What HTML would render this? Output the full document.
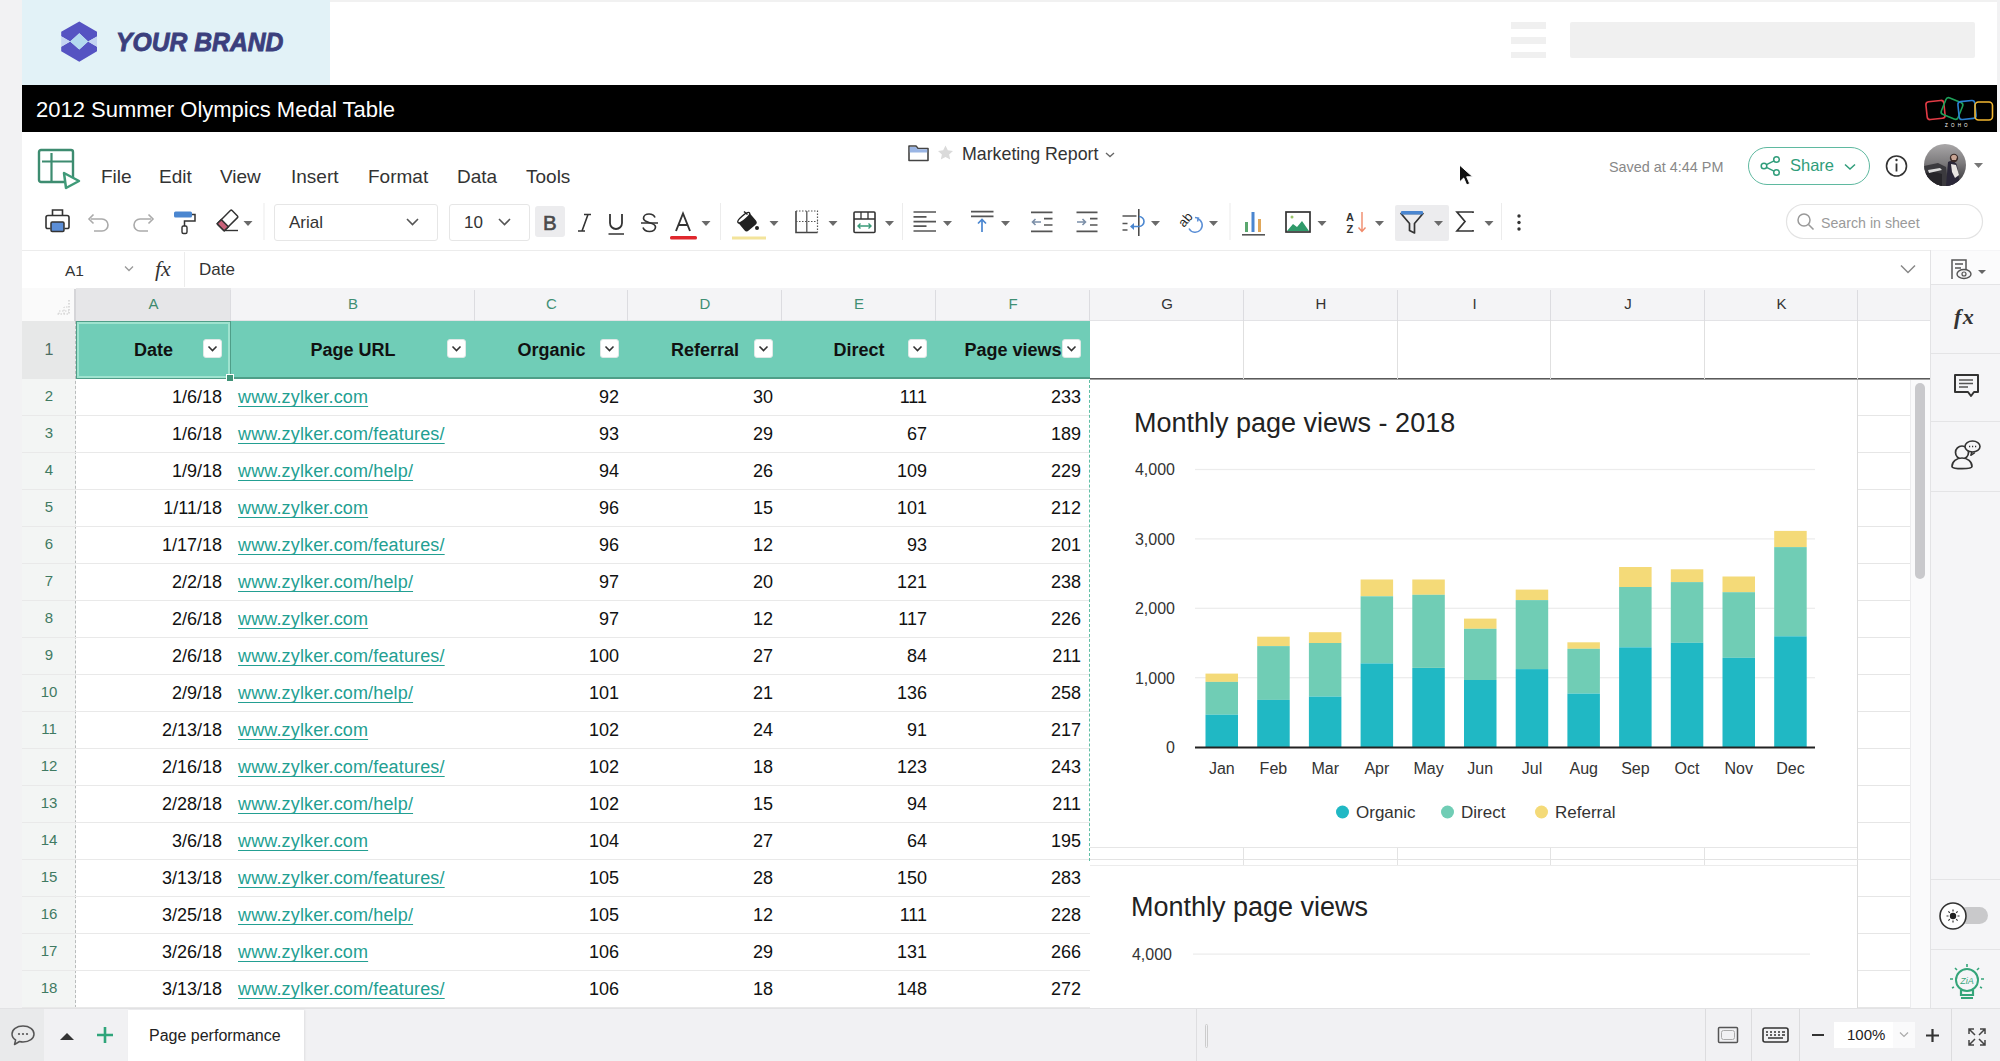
<!DOCTYPE html>
<html><head><meta charset="utf-8">
<style>
*{box-sizing:border-box;margin:0;padding:0}
html,body{width:2000px;height:1061px;overflow:hidden;background:#f2f2f3;font-family:"Liberation Sans",sans-serif;color:#222;position:relative}
.abs{position:absolute}
svg{display:block}
.menu{top:166px;font-size:19px;color:#333}
.ch{top:288px;height:33px;line-height:31px;text-align:center;font-size:15px}
.hd{top:321px;height:58px;line-height:58px;text-align:center;font-size:18px;font-weight:bold;color:#111}
.fb{top:339px;width:19px;height:19px;background:#fff;border-radius:3px;border:1px solid #dfe8e6}
.rn{left:22px;width:54px;height:37px;line-height:34px;text-align:center;font-size:15px;color:#3f7a62}
.cell{height:37px;line-height:37px;font-size:18px;color:#111;white-space:nowrap;overflow:hidden}
.cell.r{text-align:right;padding-right:9px}
.lnk{padding-left:7px;color:#239f92;text-decoration:underline;text-decoration-skip-ink:none;text-underline-offset:3px;letter-spacing:0.15px}
.tbi{top:208px}
</style></head>
<body>
<div class="abs" style="left:22px;top:0;width:1975px;height:85px;background:#fff"></div>
<div class="abs" style="left:22px;top:0;width:308px;height:85px;background:#e2f2f7"></div>
<div class="abs" style="left:330px;top:0;width:1667px;height:2px;background:#f1f1f1"></div>
<svg class="abs" style="left:0;top:0" width="120" height="80" viewBox="0 0 120 80"><path d="M61.2 31.8L79.3 21.5 97 31.8V36.5L88.1 41.5 79.3 33.2 70.2 41.5 61.2 36.2Z" fill="#5553c2"/><path d="M61.2 46.8L70.2 41.5 79.3 49.5 88.1 41.5 97 46.8V51.3L79.3 61.7 61.2 51.3Z" fill="#5553c2"/><path d="M61.2 36.2L70.2 41.5 61.2 46.8Z M97 36.5L88.1 41.5 97 46.8Z" fill="#c4d4f2"/><path d="M79.3 33.2L88.1 41.5 79.3 49.5 70.2 41.5Z" fill="#b3d9ef"/></svg>
<div class="abs" style="left:116px;top:27px;font-size:26.5px;font-weight:bold;font-style:italic;color:#3b3f7d;-webkit-text-stroke:0.9px #3b3f7d;transform:scaleX(0.932);transform-origin:0 0;white-space:nowrap">YOUR BRAND</div>
<div class="abs" style="left:1511px;top:22px;width:35px;height:7px;background:#f0f0f0"></div>
<div class="abs" style="left:1511px;top:37px;width:35px;height:7px;background:#f0f0f0"></div>
<div class="abs" style="left:1511px;top:52px;width:35px;height:6px;background:#f0f0f0"></div>
<div class="abs" style="left:1570px;top:22px;width:405px;height:36px;background:#f0f0f0;border-radius:2px"></div>
<div class="abs" style="left:22px;top:85px;width:1975px;height:47px;background:#000"></div>
<div class="abs" style="left:36px;top:97px;font-size:22px;color:#fff">2012 Summer Olympics Medal Table</div>
<div class="abs" style="left:22px;top:132px;width:1978px;height:929px;background:#fff"></div>
<div class="abs" style="left:37px;top:148px"><svg width="44" height="42" viewBox="0 0 44 42"><rect x="2" y="2" width="34" height="32" rx="2" fill="none" stroke="#3d8c70" stroke-width="2.4"/><path d="M5 13.5h31 M14.5 5v29" fill="none" stroke="#3d8c70" stroke-width="2.2"/><path d="M27 25 L42 33 L29 40 Z" fill="#fff" stroke="#3f9a78" stroke-width="2.5" stroke-linejoin="round"/></svg></div>
<div class="abs menu" style="left:101px">File</div>
<div class="abs menu" style="left:159px">Edit</div>
<div class="abs menu" style="left:220px">View</div>
<div class="abs menu" style="left:291px">Insert</div>
<div class="abs menu" style="left:368px">Format</div>
<div class="abs menu" style="left:457px">Data</div>
<div class="abs menu" style="left:526px">Tools</div>
<div class="abs" style="left:962px;top:144px;font-size:17.8px;color:#333">Marketing Report</div>
<svg class="abs" style="left:0;top:80px" width="2000" height="120" viewBox="0 80 2000 120">
<path d="M909 146h7l2 2.5h10v12h-19z" fill="#fff" stroke="#444" stroke-width="1.6" stroke-linejoin="round"/><path d="M909.8 147h6l2 2.2h9.4v3.3h-17.4z" fill="#9ab5e4"/>
<path d="M945.5 145.5l2.3 4.8 5.2.6-3.9 3.5 1.1 5.1-4.7-2.6-4.7 2.6 1.1-5.1-3.9-3.5 5.2-.6z" fill="#dadada"/>
<path d="M1106 153l4 3.6 4-3.6" fill="none" stroke="#666" stroke-width="1.3"/>
<g fill="none" stroke-width="1.6">
<rect x="1926.5" y="101" width="18" height="18" rx="3" transform="rotate(-6 1935.5 110)" stroke="#e23b45"/>
<rect x="1943" y="99.5" width="18" height="18" rx="3" transform="rotate(22 1952 108.5)" stroke="#1ea15a"/>
<rect x="1958.5" y="101" width="17" height="18" rx="3" transform="rotate(-6 1967 110)" stroke="#2b7fd0"/>
<rect x="1975" y="102" width="17.5" height="18" rx="3.5" stroke="#f2b630"/>
</g>
<text x="1945" y="127" font-size="4.5" fill="#fff" font-family="Liberation Sans" letter-spacing="3.2">ZOHO</text>
<circle cx="1764" cy="166" r="2.8" fill="none" stroke="#2f9d7a" stroke-width="1.5"/><circle cx="1776.5" cy="159.5" r="2.8" fill="none" stroke="#2f9d7a" stroke-width="1.5"/><circle cx="1776.5" cy="172.5" r="2.8" fill="none" stroke="#2f9d7a" stroke-width="1.5"/><path d="M1766.5 164.7l7.5-3.9M1766.5 167.3l7.5 3.9" stroke="#2f9d7a" stroke-width="1.4"/>
<path d="M1845 164.5l5 4.5 5-4.5" fill="none" stroke="#2f9d7a" stroke-width="1.5"/>
<circle cx="1896.5" cy="166" r="10" fill="none" stroke="#333" stroke-width="1.6"/><path d="M1896.5 163.5v8" stroke="#333" stroke-width="1.8"/><circle cx="1896.5" cy="160" r="1.2" fill="#333"/>
<path d="M1974 163h9l-4.5 5z" fill="#777"/>
<path d="M1459.5 165v17l4.2-4 3 7 3-1.4-3-6.8h6z" fill="#111" stroke="#fff" stroke-width="1"/>
</svg>
<svg class="abs" style="left:1924px;top:144px" width="42" height="42" viewBox="0 0 42 42"><defs><clipPath id="av"><circle cx="21" cy="21" r="21"/></clipPath><linearGradient id="avg" x1="0" y1="0" x2="0" y2="1"><stop offset="0" stop-color="#a9a7a8"/><stop offset="0.45" stop-color="#7d7b7d"/><stop offset="1" stop-color="#2d2c30"/></linearGradient></defs><g clip-path="url(#av)"><rect width="42" height="42" fill="url(#avg)"/><path d="M0 22l14-3 8 4 2 19H0z" fill="#3b3a3e"/><path d="M0 30c6-3 12-2 18 0v12H0z" fill="#262529"/><path d="M4 26l12-2 2 2-13 3z" fill="#d9d9d9"/><path d="M24 18c3-2 7-1 9 3l3 21H22z" fill="#2a2738"/><path d="M27 20l5 1 3 10-4 3-3-6z" fill="#e9e6e3"/><circle cx="30" cy="14" r="4.2" fill="#3a2a26"/><path d="M27 13c1-3 5-3 6 0l-1 3h-4z" fill="#c9a594"/></g></svg>
<div class="abs" style="left:1609px;top:159px;font-size:14.4px;color:#888">Saved at 4:44 PM</div>
<div class="abs" style="left:1748px;top:147px;width:122px;height:38px;border:1.6px solid #5fb9a0;border-radius:19px"></div>
<div class="abs" style="left:1790px;top:156px;font-size:16.5px;color:#2f9d7a">Share</div>
<div class="abs" style="left:274px;top:204px;width:164px;height:37px;border:1px solid #e6e6e6;border-radius:3px"></div>
<div class="abs" style="left:289px;top:213px;font-size:17px;color:#333">Arial</div>
<div class="abs" style="left:449px;top:204px;width:81px;height:37px;border:1px solid #e6e6e6;border-radius:3px"></div>
<div class="abs" style="left:464px;top:213px;font-size:17px;color:#333">10</div>
<div class="abs" style="left:535px;top:206px;width:30px;height:31px;background:#ececee;border-radius:3px"></div>
<div class="abs" style="left:22px;top:250px;width:1908px;height:1px;background:#ececec"></div>
<div class="abs" style="left:65px;top:262px;font-size:15.5px;color:#333">A1</div>
<svg class="abs" style="left:0;top:250px" width="1930" height="38" viewBox="0 0 1930 38"><path d="M125 16.5l4 4 4-4" fill="none" stroke="#999" stroke-width="1.3"/><rect x="184" y="2" width="1" height="35" fill="#ececec"/><path d="M1901 15.5l7 7 7-7" fill="none" stroke="#888" stroke-width="1.5"/></svg>
<div class="abs" style="left:155px;top:256px;font-family:'Liberation Serif',serif;font-style:italic;font-size:22px;color:#333">fx</div>
<div class="abs" style="left:199px;top:260px;font-size:17px;color:#333">Date</div>
<svg class="abs" style="left:0;top:0" width="2000" height="250" viewBox="0 0 2000 250"><path d="M52.5 215.5v-5.5h10v5.5" fill="none" stroke="#333" stroke-width="1.6"/><path d="M50.5 228.5h-3a1.5 1.5 0 0 1-1.5-1.5v-9.5a2 2 0 0 1 2-2h19a2 2 0 0 1 2 2v9.5a1.5 1.5 0 0 1-1.5 1.5h-3" fill="none" stroke="#333" stroke-width="1.6"/><rect x="51" y="222" width="13" height="9.5" rx="1.2" fill="#5c8fd8" stroke="#333" stroke-width="1.5"/><path d="M91 219h11a6 6 0 0 1 0 12h-8" fill="none" stroke="#aaa" stroke-width="1.6"/><path d="M93.5 214.5l-4.5 4.5 4.5 4.5" fill="none" stroke="#aaa" stroke-width="1.6"/><path d="M151 219h-11a6 6 0 0 0 0 12h8" fill="none" stroke="#aaa" stroke-width="1.6"/><path d="M148.5 214.5l4.5 4.5-4.5 4.5" fill="none" stroke="#aaa" stroke-width="1.6"/><rect x="174" y="211.5" width="18" height="6" rx="1.5" fill="#4a86d0"/><path d="M192 214.5h3v6.5h-10.5v5" fill="none" stroke="#333" stroke-width="1.5"/><rect x="182" y="226" width="5" height="7.5" rx="1.5" fill="#fff" stroke="#333" stroke-width="1.4"/><g transform="rotate(-45 227 221)"><rect x="218" y="216" width="20" height="10" rx="1.2" fill="#fff" stroke="#333" stroke-width="1.5"/><rect x="218" y="216" width="6" height="10" fill="#c9627a" stroke="#333" stroke-width="1.5"/></g><path d="M225 230.5h13" stroke="#333" stroke-width="1.4"/><path d="M243.5 221h9l-4.5 5z" fill="#6a6a6a"/><rect x="263.5" y="203" width="1" height="37" fill="#ececec"/><rect x="720" y="203" width="1" height="37" fill="#ececec"/><rect x="902" y="203" width="1" height="37" fill="#ececec"/><rect x="1229.5" y="203" width="1" height="37" fill="#ececec"/><rect x="1501" y="203" width="1" height="37" fill="#ececec"/><text x="543" y="230" font-size="20.5" fill="#4a4a4a" stroke="#4a4a4a" stroke-width="0.6" font-family="Liberation Sans">B</text><path d="M584 214.5h7M578 231h7M588 214.5l-6 16.5" fill="none" stroke="#333" stroke-width="1.6"/><path d="M610 214v9a6 6 0 0 0 12 0v-9" fill="none" stroke="#333" stroke-width="1.8"/><path d="M608.5 234h15.5" stroke="#333" stroke-width="1.5"/><path d="M655 217.5c-1-2.5-3.5-3.5-6-3.5-3 0-5.5 1.7-5.5 4.2 0 5.5 12 3.5 12 8.8 0 2.6-2.6 4.5-6 4.5-3 0-5.5-1.3-6.5-4" fill="none" stroke="#333" stroke-width="1.7"/><path d="M641 223h17" stroke="#333" stroke-width="1.5"/><path d="M676 231l7-17.5 7 17.5M678.8 225h8.4" fill="none" stroke="#333" stroke-width="1.9"/><rect x="670" y="236" width="27" height="3.5" rx="1.5" fill="#e0262c"/><path d="M701.5 221h9l-4.5 5z" fill="#6a6a6a"/><g transform="rotate(-40 748 222)"><path d="M740 216h15v10a3 3 0 0 1-3 3h-9a3 3 0 0 1-3-3z" fill="#222"/><ellipse cx="747.5" cy="216" rx="7.5" ry="2.2" fill="#fff" stroke="#222" stroke-width="1.4"/></g><path d="M744 211.5l3.5 3" stroke="#222" stroke-width="1.5"/><circle cx="757" cy="228" r="2" fill="#222"/><rect x="732" y="236.5" width="34" height="3" fill="#f3e49b"/><path d="M769.5 221h9l-4.5 5z" fill="#6a6a6a"/><path d="M796 211v21.5h21.5" fill="none" stroke="#444" stroke-width="1.6"/><path d="M796 211h21.5v21.5M796 221.5h21.5" fill="none" stroke="#555" stroke-width="1.2" stroke-dasharray="1.5 1.5"/><path d="M806.8 211v21.5" stroke="#555" stroke-width="1.3"/><path d="M828.5 221h9l-4.5 5z" fill="#6a6a6a"/><rect x="854" y="212" width="21" height="20.5" rx="1" fill="#fff" stroke="#333" stroke-width="1.6"/><path d="M854 219h21M861 212v7M868 212v7" stroke="#333" stroke-width="1.3"/><path d="M858 226h13M860.5 223.5l-2.5 2.5 2.5 2.5M868.5 223.5l2.5 2.5-2.5 2.5" fill="none" stroke="#3a9a78" stroke-width="1.4"/><path d="M885 221h9l-4.5 5z" fill="#6a6a6a"/><path d="M913.5 212h22.5M913.5 216.8h13M913.5 221.6h22.5M913.5 226.2h13M913.5 231h22.5" stroke="#555" stroke-width="1.7"/><path d="M943 221h9l-4.5 5z" fill="#6a6a6a"/><path d="M971 211.6h22.5M971 216.4h22.5" stroke="#555" stroke-width="1.7"/><path d="M982 232v-12M978 223.5l4-4 4 4" fill="none" stroke="#4a86d0" stroke-width="1.7"/><path d="M1001 221h9l-4.5 5z" fill="#6a6a6a"/><path d="M1031 212.3h21.5M1044 218.7h8.5M1044 225h8.5M1031 231.4h21.5" stroke="#555" stroke-width="1.7"/><path d="M1041 222h-8.5M1035.5 219l-3 3 3 3" fill="none" stroke="#7b8fa8" stroke-width="1.6"/><path d="M1076.5 212.3h21M1090 218.7h7.5M1090 225h7.5M1076.5 231.4h21" stroke="#555" stroke-width="1.7"/><path d="M1077 222h8.5M1082.5 219l3 3-3 3" fill="none" stroke="#7b8fa8" stroke-width="1.6"/><path d="M1122.5 216h14M1122.5 223.5h5M1122.5 230h5" stroke="#555" stroke-width="1.6"/><path d="M1138.8 209v27" stroke="#444" stroke-width="1.5"/><path d="M1139 216.5a5 5 0 0 1 0 10h-6" fill="none" stroke="#4a86d0" stroke-width="1.6"/><path d="M1134 223l-4 3.5 4 3.5z" fill="#4a86d0"/><path d="M1151 221h9l-4.5 5z" fill="#6a6a6a"/><text x="0" y="0" font-size="13" fill="#222" font-family="Liberation Sans" transform="translate(1184 228) rotate(-50)">ab</text><path d="M1197 218.5a7 7 0 1 1-8 10" fill="none" stroke="#5b8fd6" stroke-width="1.5"/><path d="M1195 217.5l3.5 0.5-1 3.5" fill="none" stroke="#5b8fd6" stroke-width="1.4"/><path d="M1209 221h9l-4.5 5z" fill="#6a6a6a"/><rect x="1245" y="222" width="3" height="10" fill="#5aa76e"/><rect x="1251.5" y="212" width="3" height="20" fill="#4a86d0"/><rect x="1258" y="219" width="3" height="13" fill="#e0a75a"/><rect x="1242" y="234" width="23" height="1.6" fill="#555"/><rect x="1286" y="212" width="24" height="20" fill="#fff" stroke="#333" stroke-width="1.7"/><path d="M1287 231l6-7 4 3 5-6 7 10z" fill="#2f9a6a"/><circle cx="1292" cy="217" r="1.5" fill="#9ac46a"/><path d="M1317.5 221h9l-4.5 5z" fill="#6a6a6a"/><text x="1346" y="221" font-size="11" font-weight="bold" fill="#333" font-family="Liberation Sans">A</text><text x="1346.5" y="233" font-size="11" font-weight="bold" fill="#333" font-family="Liberation Sans">Z</text><path d="M1362 212v19M1358.5 227.5l3.5 4 3.5-4" fill="none" stroke="#f08a6a" stroke-width="1.4"/><path d="M1375 221h9l-4.5 5z" fill="#6a6a6a"/><rect x="1395" y="205" width="54" height="36" rx="2" fill="#ececee"/><path d="M1401 213.5h22l-8.5 10v9.5l-5-2.5v-7z" fill="none" stroke="#333" stroke-width="1.7" stroke-linejoin="round"/><rect x="1401" y="211" width="22" height="3.5" rx="1" fill="#4a86d0"/><path d="M1434 221h9l-4.5 5z" fill="#6a6a6a"/><path d="M1473 213v-1h-16l8 9.5-8 9.5h16v-1" fill="none" stroke="#333" stroke-width="1.7"/><path d="M1484.5 221h9l-4.5 5z" fill="#6a6a6a"/><circle cx="1519" cy="216" r="1.7" fill="#333"/><circle cx="1519" cy="222.5" r="1.7" fill="#333"/><circle cx="1519" cy="229" r="1.7" fill="#333"/><path d="M407 219l5.5 5.5 5.5-5.5" fill="none" stroke="#555" stroke-width="1.6"/><path d="M499 219l5.5 5.5 5.5-5.5" fill="none" stroke="#555" stroke-width="1.6"/><rect x="1786.5" y="204.5" width="196" height="34" rx="17" fill="#fff" stroke="#e3e3e3" stroke-width="1.2"/><circle cx="1804" cy="220" r="6" fill="none" stroke="#999" stroke-width="1.5"/><path d="M1808.5 224.5l5 5" stroke="#999" stroke-width="1.6"/><text x="1821" y="228" font-size="14.2" fill="#9a9a9a" font-family="Liberation Sans">Search in sheet</text></svg><div class="abs" style="left:22px;top:288px;width:1908px;height:33px;background:#f4f4f6;border-bottom:1px solid #e3e3e6"></div>
<div class="abs" style="left:76px;top:288px;width:155px;height:33px;background:#e6e6e8"></div>
<div class="abs" style="left:22px;top:288px;width:54px;height:33px;background:#fafafa"></div>
<svg class="abs" style="left:55px;top:299px" width="16" height="16" viewBox="0 0 16 16"><path d="M14 1v14H1" fill="none" stroke="#c8c8c8" stroke-width="1.2" stroke-dasharray="1.5 1.5"/><path d="M9 15V8h5M4 15v-3h10" fill="none" stroke="#d0d0d0" stroke-width="1" stroke-dasharray="1.5 1.5"/></svg>
<div class="abs" style="left:74px;top:289px;width:2px;height:32px;background:#d5d5d8"></div>
<div class="abs ch" style="left:76px;width:155px;color:#3d8a6e">A</div>
<div class="abs" style="left:230px;top:290px;width:1px;height:31px;background:#dcdce0"></div>
<div class="abs ch" style="left:231px;width:244px;color:#3f8f74">B</div>
<div class="abs" style="left:474px;top:290px;width:1px;height:31px;background:#dcdce0"></div>
<div class="abs ch" style="left:475px;width:153px;color:#3f8f74">C</div>
<div class="abs" style="left:627px;top:290px;width:1px;height:31px;background:#dcdce0"></div>
<div class="abs ch" style="left:628px;width:154px;color:#3f8f74">D</div>
<div class="abs" style="left:781px;top:290px;width:1px;height:31px;background:#dcdce0"></div>
<div class="abs ch" style="left:782px;width:154px;color:#3f8f74">E</div>
<div class="abs" style="left:935px;top:290px;width:1px;height:31px;background:#dcdce0"></div>
<div class="abs ch" style="left:936px;width:154px;color:#3f8f74">F</div>
<div class="abs" style="left:1089px;top:290px;width:1px;height:31px;background:#dcdce0"></div>
<div class="abs ch" style="left:1090px;width:154px;color:#333">G</div>
<div class="abs" style="left:1243px;top:290px;width:1px;height:31px;background:#dcdce0"></div>
<div class="abs ch" style="left:1244px;width:154px;color:#333">H</div>
<div class="abs" style="left:1397px;top:290px;width:1px;height:31px;background:#dcdce0"></div>
<div class="abs ch" style="left:1398px;width:153px;color:#333">I</div>
<div class="abs" style="left:1550px;top:290px;width:1px;height:31px;background:#dcdce0"></div>
<div class="abs ch" style="left:1551px;width:154px;color:#333">J</div>
<div class="abs" style="left:1704px;top:290px;width:1px;height:31px;background:#dcdce0"></div>
<div class="abs ch" style="left:1705px;width:153px;color:#333">K</div>
<div class="abs" style="left:1857px;top:290px;width:1px;height:31px;background:#dcdce0"></div>
<div class="abs" style="left:22px;top:321px;width:54px;height:687px;background:#f3f5f4"></div>
<div class="abs" style="left:22px;top:321px;width:54px;height:58px;background:#e7e8e8"></div>
<div class="abs" style="left:75px;top:321px;width:1px;height:687px;border-left:1px dashed #b9bcbc"></div>
<div class="abs" style="left:76px;top:321px;width:1014px;height:58px;background:#70cdb7;border-bottom:2px solid #4f9e88"></div>
<div class="abs" style="left:1090px;top:378px;width:840px;height:1px;background:#5a5a5a"></div><div class="abs" style="left:1090px;top:379px;width:840px;height:1px;background:#a0a0a0"></div>
<div class="abs ch" style="left:22px;width:54px;top:321px;height:58px;line-height:58px;color:#4d6e63;font-size:16px">1</div>
<div class="abs hd" style="left:76px;width:155px">Date</div>
<div class="abs fb" style="left:203px"><svg width="17" height="17" viewBox="0 0 17 17"><path d="M4.5 6.5l4 4 4-4" fill="none" stroke="#333" stroke-width="1.6"/></svg></div>
<div class="abs hd" style="left:231px;width:244px">Page URL</div>
<div class="abs fb" style="left:447px"><svg width="17" height="17" viewBox="0 0 17 17"><path d="M4.5 6.5l4 4 4-4" fill="none" stroke="#333" stroke-width="1.6"/></svg></div>
<div class="abs hd" style="left:475px;width:153px">Organic</div>
<div class="abs fb" style="left:600px"><svg width="17" height="17" viewBox="0 0 17 17"><path d="M4.5 6.5l4 4 4-4" fill="none" stroke="#333" stroke-width="1.6"/></svg></div>
<div class="abs hd" style="left:628px;width:154px">Referral</div>
<div class="abs fb" style="left:754px"><svg width="17" height="17" viewBox="0 0 17 17"><path d="M4.5 6.5l4 4 4-4" fill="none" stroke="#333" stroke-width="1.6"/></svg></div>
<div class="abs hd" style="left:782px;width:154px">Direct</div>
<div class="abs fb" style="left:908px"><svg width="17" height="17" viewBox="0 0 17 17"><path d="M4.5 6.5l4 4 4-4" fill="none" stroke="#333" stroke-width="1.6"/></svg></div>
<div class="abs hd" style="left:936px;width:154px">Page views</div>
<div class="abs fb" style="left:1062px"><svg width="17" height="17" viewBox="0 0 17 17"><path d="M4.5 6.5l4 4 4-4" fill="none" stroke="#333" stroke-width="1.6"/></svg></div>
<div class="abs" style="left:1243px;top:321px;width:1px;height:58px;background:#e0e0e0"></div>
<div class="abs" style="left:1397px;top:321px;width:1px;height:58px;background:#e0e0e0"></div>
<div class="abs" style="left:1550px;top:321px;width:1px;height:58px;background:#e0e0e0"></div>
<div class="abs" style="left:1704px;top:321px;width:1px;height:58px;background:#e0e0e0"></div>
<div class="abs" style="left:1857px;top:321px;width:1px;height:58px;background:#e0e0e0"></div>
<div class="abs" style="left:77px;top:322px;width:153px;height:56px;border:2px solid #9fe3cf;outline:1px solid #4f9e88"></div>
<div class="abs" style="left:226px;top:374px;width:8px;height:8px;background:#3f9478;border:1px solid #fff"></div>
<div class="abs rn" style="top:379px">2</div>
<div class="abs" style="left:22px;top:415px;width:1068px;height:1px;background:#e9e9e9"></div>
<div class="abs cell r" style="left:76px;top:379px;width:155px">1/6/18</div>
<div class="abs cell lnk" style="left:231px;top:379px;width:244px">www.zylker.com</div>
<div class="abs cell r" style="left:475px;top:379px;width:153px">92</div>
<div class="abs cell r" style="left:628px;top:379px;width:154px">30</div>
<div class="abs cell r" style="left:782px;top:379px;width:154px">111</div>
<div class="abs cell r" style="left:936px;top:379px;width:154px">233</div>
<div class="abs rn" style="top:416px">3</div>
<div class="abs" style="left:22px;top:452px;width:1068px;height:1px;background:#e9e9e9"></div>
<div class="abs cell r" style="left:76px;top:416px;width:155px">1/6/18</div>
<div class="abs cell lnk" style="left:231px;top:416px;width:244px">www.zylker.com/features/</div>
<div class="abs cell r" style="left:475px;top:416px;width:153px">93</div>
<div class="abs cell r" style="left:628px;top:416px;width:154px">29</div>
<div class="abs cell r" style="left:782px;top:416px;width:154px">67</div>
<div class="abs cell r" style="left:936px;top:416px;width:154px">189</div>
<div class="abs rn" style="top:453px">4</div>
<div class="abs" style="left:22px;top:489px;width:1068px;height:1px;background:#e9e9e9"></div>
<div class="abs cell r" style="left:76px;top:453px;width:155px">1/9/18</div>
<div class="abs cell lnk" style="left:231px;top:453px;width:244px">www.zylker.com/help/</div>
<div class="abs cell r" style="left:475px;top:453px;width:153px">94</div>
<div class="abs cell r" style="left:628px;top:453px;width:154px">26</div>
<div class="abs cell r" style="left:782px;top:453px;width:154px">109</div>
<div class="abs cell r" style="left:936px;top:453px;width:154px">229</div>
<div class="abs rn" style="top:490px">5</div>
<div class="abs" style="left:22px;top:526px;width:1068px;height:1px;background:#e9e9e9"></div>
<div class="abs cell r" style="left:76px;top:490px;width:155px">1/11/18</div>
<div class="abs cell lnk" style="left:231px;top:490px;width:244px">www.zylker.com</div>
<div class="abs cell r" style="left:475px;top:490px;width:153px">96</div>
<div class="abs cell r" style="left:628px;top:490px;width:154px">15</div>
<div class="abs cell r" style="left:782px;top:490px;width:154px">101</div>
<div class="abs cell r" style="left:936px;top:490px;width:154px">212</div>
<div class="abs rn" style="top:527px">6</div>
<div class="abs" style="left:22px;top:563px;width:1068px;height:1px;background:#e9e9e9"></div>
<div class="abs cell r" style="left:76px;top:527px;width:155px">1/17/18</div>
<div class="abs cell lnk" style="left:231px;top:527px;width:244px">www.zylker.com/features/</div>
<div class="abs cell r" style="left:475px;top:527px;width:153px">96</div>
<div class="abs cell r" style="left:628px;top:527px;width:154px">12</div>
<div class="abs cell r" style="left:782px;top:527px;width:154px">93</div>
<div class="abs cell r" style="left:936px;top:527px;width:154px">201</div>
<div class="abs rn" style="top:564px">7</div>
<div class="abs" style="left:22px;top:600px;width:1068px;height:1px;background:#e9e9e9"></div>
<div class="abs cell r" style="left:76px;top:564px;width:155px">2/2/18</div>
<div class="abs cell lnk" style="left:231px;top:564px;width:244px">www.zylker.com/help/</div>
<div class="abs cell r" style="left:475px;top:564px;width:153px">97</div>
<div class="abs cell r" style="left:628px;top:564px;width:154px">20</div>
<div class="abs cell r" style="left:782px;top:564px;width:154px">121</div>
<div class="abs cell r" style="left:936px;top:564px;width:154px">238</div>
<div class="abs rn" style="top:601px">8</div>
<div class="abs" style="left:22px;top:637px;width:1068px;height:1px;background:#e9e9e9"></div>
<div class="abs cell r" style="left:76px;top:601px;width:155px">2/6/18</div>
<div class="abs cell lnk" style="left:231px;top:601px;width:244px">www.zylker.com</div>
<div class="abs cell r" style="left:475px;top:601px;width:153px">97</div>
<div class="abs cell r" style="left:628px;top:601px;width:154px">12</div>
<div class="abs cell r" style="left:782px;top:601px;width:154px">117</div>
<div class="abs cell r" style="left:936px;top:601px;width:154px">226</div>
<div class="abs rn" style="top:638px">9</div>
<div class="abs" style="left:22px;top:674px;width:1068px;height:1px;background:#e9e9e9"></div>
<div class="abs cell r" style="left:76px;top:638px;width:155px">2/6/18</div>
<div class="abs cell lnk" style="left:231px;top:638px;width:244px">www.zylker.com/features/</div>
<div class="abs cell r" style="left:475px;top:638px;width:153px">100</div>
<div class="abs cell r" style="left:628px;top:638px;width:154px">27</div>
<div class="abs cell r" style="left:782px;top:638px;width:154px">84</div>
<div class="abs cell r" style="left:936px;top:638px;width:154px">211</div>
<div class="abs rn" style="top:675px">10</div>
<div class="abs" style="left:22px;top:711px;width:1068px;height:1px;background:#e9e9e9"></div>
<div class="abs cell r" style="left:76px;top:675px;width:155px">2/9/18</div>
<div class="abs cell lnk" style="left:231px;top:675px;width:244px">www.zylker.com/help/</div>
<div class="abs cell r" style="left:475px;top:675px;width:153px">101</div>
<div class="abs cell r" style="left:628px;top:675px;width:154px">21</div>
<div class="abs cell r" style="left:782px;top:675px;width:154px">136</div>
<div class="abs cell r" style="left:936px;top:675px;width:154px">258</div>
<div class="abs rn" style="top:712px">11</div>
<div class="abs" style="left:22px;top:748px;width:1068px;height:1px;background:#e9e9e9"></div>
<div class="abs cell r" style="left:76px;top:712px;width:155px">2/13/18</div>
<div class="abs cell lnk" style="left:231px;top:712px;width:244px">www.zylker.com</div>
<div class="abs cell r" style="left:475px;top:712px;width:153px">102</div>
<div class="abs cell r" style="left:628px;top:712px;width:154px">24</div>
<div class="abs cell r" style="left:782px;top:712px;width:154px">91</div>
<div class="abs cell r" style="left:936px;top:712px;width:154px">217</div>
<div class="abs rn" style="top:749px">12</div>
<div class="abs" style="left:22px;top:785px;width:1068px;height:1px;background:#e9e9e9"></div>
<div class="abs cell r" style="left:76px;top:749px;width:155px">2/16/18</div>
<div class="abs cell lnk" style="left:231px;top:749px;width:244px">www.zylker.com/features/</div>
<div class="abs cell r" style="left:475px;top:749px;width:153px">102</div>
<div class="abs cell r" style="left:628px;top:749px;width:154px">18</div>
<div class="abs cell r" style="left:782px;top:749px;width:154px">123</div>
<div class="abs cell r" style="left:936px;top:749px;width:154px">243</div>
<div class="abs rn" style="top:786px">13</div>
<div class="abs" style="left:22px;top:822px;width:1068px;height:1px;background:#e9e9e9"></div>
<div class="abs cell r" style="left:76px;top:786px;width:155px">2/28/18</div>
<div class="abs cell lnk" style="left:231px;top:786px;width:244px">www.zylker.com/help/</div>
<div class="abs cell r" style="left:475px;top:786px;width:153px">102</div>
<div class="abs cell r" style="left:628px;top:786px;width:154px">15</div>
<div class="abs cell r" style="left:782px;top:786px;width:154px">94</div>
<div class="abs cell r" style="left:936px;top:786px;width:154px">211</div>
<div class="abs rn" style="top:823px">14</div>
<div class="abs" style="left:22px;top:859px;width:1068px;height:1px;background:#e9e9e9"></div>
<div class="abs cell r" style="left:76px;top:823px;width:155px">3/6/18</div>
<div class="abs cell lnk" style="left:231px;top:823px;width:244px">www.zylker.com</div>
<div class="abs cell r" style="left:475px;top:823px;width:153px">104</div>
<div class="abs cell r" style="left:628px;top:823px;width:154px">27</div>
<div class="abs cell r" style="left:782px;top:823px;width:154px">64</div>
<div class="abs cell r" style="left:936px;top:823px;width:154px">195</div>
<div class="abs rn" style="top:860px">15</div>
<div class="abs" style="left:22px;top:896px;width:1068px;height:1px;background:#e9e9e9"></div>
<div class="abs cell r" style="left:76px;top:860px;width:155px">3/13/18</div>
<div class="abs cell lnk" style="left:231px;top:860px;width:244px">www.zylker.com/features/</div>
<div class="abs cell r" style="left:475px;top:860px;width:153px">105</div>
<div class="abs cell r" style="left:628px;top:860px;width:154px">28</div>
<div class="abs cell r" style="left:782px;top:860px;width:154px">150</div>
<div class="abs cell r" style="left:936px;top:860px;width:154px">283</div>
<div class="abs rn" style="top:897px">16</div>
<div class="abs" style="left:22px;top:933px;width:1068px;height:1px;background:#e9e9e9"></div>
<div class="abs cell r" style="left:76px;top:897px;width:155px">3/25/18</div>
<div class="abs cell lnk" style="left:231px;top:897px;width:244px">www.zylker.com/help/</div>
<div class="abs cell r" style="left:475px;top:897px;width:153px">105</div>
<div class="abs cell r" style="left:628px;top:897px;width:154px">12</div>
<div class="abs cell r" style="left:782px;top:897px;width:154px">111</div>
<div class="abs cell r" style="left:936px;top:897px;width:154px">228</div>
<div class="abs rn" style="top:934px">17</div>
<div class="abs" style="left:22px;top:970px;width:1068px;height:1px;background:#e9e9e9"></div>
<div class="abs cell r" style="left:76px;top:934px;width:155px">3/26/18</div>
<div class="abs cell lnk" style="left:231px;top:934px;width:244px">www.zylker.com</div>
<div class="abs cell r" style="left:475px;top:934px;width:153px">106</div>
<div class="abs cell r" style="left:628px;top:934px;width:154px">29</div>
<div class="abs cell r" style="left:782px;top:934px;width:154px">131</div>
<div class="abs cell r" style="left:936px;top:934px;width:154px">266</div>
<div class="abs rn" style="top:971px">18</div>
<div class="abs" style="left:22px;top:1007px;width:1068px;height:1px;background:#e9e9e9"></div>
<div class="abs cell r" style="left:76px;top:971px;width:155px">3/13/18</div>
<div class="abs cell lnk" style="left:231px;top:971px;width:244px">www.zylker.com/features/</div>
<div class="abs cell r" style="left:475px;top:971px;width:153px">106</div>
<div class="abs cell r" style="left:628px;top:971px;width:154px">18</div>
<div class="abs cell r" style="left:782px;top:971px;width:154px">148</div>
<div class="abs cell r" style="left:936px;top:971px;width:154px">272</div>
<div class="abs" style="left:1089px;top:380px;width:1px;height:481px;border-left:1px dashed #5fbfa5"></div><div class="abs" style="left:1090px;top:380px;width:768px;height:468px;background:#fff;border-bottom:1px solid #e6e6e6;border-right:1px solid #ececec"></div>
<svg width="768" height="468" viewBox="0 0 768 468" style="position:absolute;left:1090px;top:380px"><text x="44" y="52" font-size="27" fill="#222" font-family="Liberation Sans">Monthly page views - 2018</text><text x="85" y="95.4" font-size="16" fill="#333" text-anchor="end" font-family="Liberation Sans">4,000</text><rect x="105" y="88.9" width="620" height="1.2" fill="#ececec"/><text x="85" y="164.8" font-size="16" fill="#333" text-anchor="end" font-family="Liberation Sans">3,000</text><rect x="105" y="158.3" width="620" height="1.2" fill="#ececec"/><text x="85" y="234.2" font-size="16" fill="#333" text-anchor="end" font-family="Liberation Sans">2,000</text><rect x="105" y="227.7" width="620" height="1.2" fill="#ececec"/><text x="85" y="303.6" font-size="16" fill="#333" text-anchor="end" font-family="Liberation Sans">1,000</text><rect x="105" y="297.1" width="620" height="1.2" fill="#ececec"/><text x="85" y="373.0" font-size="16" fill="#333" text-anchor="end" font-family="Liberation Sans">0</text><rect x="115.5" y="293.6" width="32.5" height="8.3" fill="#f4da78"/><rect x="115.5" y="301.9" width="32.5" height="32.8" fill="#70cdb5"/><rect x="115.5" y="334.7" width="32.5" height="32.3" fill="#20b8c4"/><text x="131.8" y="394" font-size="16" fill="#333" text-anchor="middle" font-family="Liberation Sans">Jan</text><rect x="167.2" y="256.7" width="32.5" height="9.4" fill="#f4da78"/><rect x="167.2" y="266.1" width="32.5" height="53.8" fill="#70cdb5"/><rect x="167.2" y="319.9" width="32.5" height="47.1" fill="#20b8c4"/><text x="183.4" y="394" font-size="16" fill="#333" text-anchor="middle" font-family="Liberation Sans">Feb</text><rect x="218.9" y="252.2" width="32.5" height="10.8" fill="#f4da78"/><rect x="218.9" y="263.0" width="32.5" height="53.6" fill="#70cdb5"/><rect x="218.9" y="316.6" width="32.5" height="50.4" fill="#20b8c4"/><text x="235.2" y="394" font-size="16" fill="#333" text-anchor="middle" font-family="Liberation Sans">Mar</text><rect x="270.6" y="199.5" width="32.5" height="16.9" fill="#f4da78"/><rect x="270.6" y="216.3" width="32.5" height="67.1" fill="#70cdb5"/><rect x="270.6" y="283.4" width="32.5" height="83.6" fill="#20b8c4"/><text x="286.9" y="394" font-size="16" fill="#333" text-anchor="middle" font-family="Liberation Sans">Apr</text><rect x="322.3" y="199.5" width="32.5" height="15.3" fill="#f4da78"/><rect x="322.3" y="214.8" width="32.5" height="73.1" fill="#70cdb5"/><rect x="322.3" y="288.0" width="32.5" height="79.0" fill="#20b8c4"/><text x="338.6" y="394" font-size="16" fill="#333" text-anchor="middle" font-family="Liberation Sans">May</text><rect x="374.0" y="238.6" width="32.5" height="10.2" fill="#f4da78"/><rect x="374.0" y="248.8" width="32.5" height="51.2" fill="#70cdb5"/><rect x="374.0" y="300.0" width="32.5" height="67.0" fill="#20b8c4"/><text x="390.2" y="394" font-size="16" fill="#333" text-anchor="middle" font-family="Liberation Sans">Jun</text><rect x="425.7" y="209.6" width="32.5" height="10.5" fill="#f4da78"/><rect x="425.7" y="220.1" width="32.5" height="68.9" fill="#70cdb5"/><rect x="425.7" y="289.1" width="32.5" height="77.9" fill="#20b8c4"/><text x="442.0" y="394" font-size="16" fill="#333" text-anchor="middle" font-family="Liberation Sans">Jul</text><rect x="477.4" y="262.3" width="32.5" height="6.5" fill="#f4da78"/><rect x="477.4" y="268.8" width="32.5" height="44.8" fill="#70cdb5"/><rect x="477.4" y="313.6" width="32.5" height="53.4" fill="#20b8c4"/><text x="493.7" y="394" font-size="16" fill="#333" text-anchor="middle" font-family="Liberation Sans">Aug</text><rect x="529.1" y="187.0" width="32.5" height="20.0" fill="#f4da78"/><rect x="529.1" y="207.0" width="32.5" height="60.2" fill="#70cdb5"/><rect x="529.1" y="267.3" width="32.5" height="99.7" fill="#20b8c4"/><text x="545.4" y="394" font-size="16" fill="#333" text-anchor="middle" font-family="Liberation Sans">Sep</text><rect x="580.8" y="189.3" width="32.5" height="12.8" fill="#f4da78"/><rect x="580.8" y="202.1" width="32.5" height="60.7" fill="#70cdb5"/><rect x="580.8" y="262.8" width="32.5" height="104.2" fill="#20b8c4"/><text x="597.0" y="394" font-size="16" fill="#333" text-anchor="middle" font-family="Liberation Sans">Oct</text><rect x="632.5" y="196.5" width="32.5" height="15.8" fill="#f4da78"/><rect x="632.5" y="212.2" width="32.5" height="65.6" fill="#70cdb5"/><rect x="632.5" y="277.8" width="32.5" height="89.2" fill="#20b8c4"/><text x="648.8" y="394" font-size="16" fill="#333" text-anchor="middle" font-family="Liberation Sans">Nov</text><rect x="684.2" y="150.9" width="32.5" height="16.2" fill="#f4da78"/><rect x="684.2" y="167.1" width="32.5" height="89.2" fill="#70cdb5"/><rect x="684.2" y="256.3" width="32.5" height="110.7" fill="#20b8c4"/><text x="700.5" y="394" font-size="16" fill="#333" text-anchor="middle" font-family="Liberation Sans">Dec</text><rect x="105" y="366.5" width="620" height="2" fill="#222"/><circle cx="252.5" cy="432" r="6.5" fill="#20b8c4"/><text x="266.0" y="438" font-size="17" fill="#333" font-family="Liberation Sans">Organic</text><circle cx="357.5" cy="432" r="6.5" fill="#70cdb5"/><text x="371.0" y="438" font-size="17" fill="#333" font-family="Liberation Sans">Direct</text><circle cx="451.5" cy="432" r="6.5" fill="#f4da78"/><text x="465.0" y="438" font-size="17" fill="#333" font-family="Liberation Sans">Referral</text></svg>
<div class="abs" style="left:1090px;top:865px;width:768px;height:143px;background:#fff;border-top:1px solid #ececec;border-right:1px solid #ececec"></div>
<svg width="768" height="143" style="position:absolute;left:1090px;top:865px"><text x="41" y="51" font-size="27" fill="#222" font-family="Liberation Sans">Monthly page views</text><text x="82" y="95" font-size="16" fill="#333" text-anchor="end" font-family="Liberation Sans">4,000</text><rect x="103" y="88.5" width="617" height="1.2" fill="#ececec"/></svg><div class="abs" style="left:1858px;top:415px;width:52px;height:1px;background:#e6e6e6"></div>
<div class="abs" style="left:1858px;top:452px;width:52px;height:1px;background:#e6e6e6"></div>
<div class="abs" style="left:1858px;top:489px;width:52px;height:1px;background:#e6e6e6"></div>
<div class="abs" style="left:1858px;top:526px;width:52px;height:1px;background:#e6e6e6"></div>
<div class="abs" style="left:1858px;top:563px;width:52px;height:1px;background:#e6e6e6"></div>
<div class="abs" style="left:1858px;top:600px;width:52px;height:1px;background:#e6e6e6"></div>
<div class="abs" style="left:1858px;top:637px;width:52px;height:1px;background:#e6e6e6"></div>
<div class="abs" style="left:1858px;top:674px;width:52px;height:1px;background:#e6e6e6"></div>
<div class="abs" style="left:1858px;top:711px;width:52px;height:1px;background:#e6e6e6"></div>
<div class="abs" style="left:1858px;top:748px;width:52px;height:1px;background:#e6e6e6"></div>
<div class="abs" style="left:1858px;top:785px;width:52px;height:1px;background:#e6e6e6"></div>
<div class="abs" style="left:1858px;top:822px;width:52px;height:1px;background:#e6e6e6"></div>
<div class="abs" style="left:1858px;top:859px;width:52px;height:1px;background:#e6e6e6"></div>
<div class="abs" style="left:1858px;top:896px;width:52px;height:1px;background:#e6e6e6"></div>
<div class="abs" style="left:1858px;top:933px;width:52px;height:1px;background:#e6e6e6"></div>
<div class="abs" style="left:1858px;top:970px;width:52px;height:1px;background:#e6e6e6"></div>
<div class="abs" style="left:1858px;top:1007px;width:52px;height:1px;background:#e6e6e6"></div>
<div class="abs" style="left:1858px;top:1044px;width:52px;height:1px;background:#e6e6e6"></div>
<div class="abs" style="left:1857px;top:380px;width:1px;height:628px;background:#dcdcdc"></div>
<div class="abs" style="left:1090px;top:859px;width:768px;height:1px;background:#e3e3e3"></div>
<div class="abs" style="left:1243px;top:848px;width:1px;height:17px;background:#e3e3e3"></div>
<div class="abs" style="left:1397px;top:848px;width:1px;height:17px;background:#e3e3e3"></div>
<div class="abs" style="left:1550px;top:848px;width:1px;height:17px;background:#e3e3e3"></div>
<div class="abs" style="left:1704px;top:848px;width:1px;height:17px;background:#e3e3e3"></div>
<div class="abs" style="left:1910px;top:380px;width:20px;height:628px;background:#fafafb;border-left:1px solid #ececee"></div>
<div class="abs" style="left:1915px;top:383px;width:10px;height:196px;background:#c9c9cc;border-radius:5px"></div>
<div class="abs" style="left:1930px;top:250px;width:70px;height:758px;background:#f5f5f7;border-left:1px solid #e3e3e5"></div>
<div class="abs" style="left:1931px;top:251px;width:69px;height:33px;background:#fbfbfc"></div>
<div class="abs" style="left:1931px;top:284px;width:69px;height:1px;background:#e4e4e6"></div>
<div class="abs" style="left:1931px;top:353px;width:69px;height:1px;background:#e4e4e6"></div>
<div class="abs" style="left:1931px;top:421px;width:69px;height:1px;background:#e4e4e6"></div>
<div class="abs" style="left:1931px;top:491px;width:69px;height:1px;background:#e4e4e6"></div>
<div class="abs" style="left:1931px;top:879px;width:69px;height:1px;background:#e4e4e6"></div>
<div class="abs" style="left:1931px;top:949px;width:69px;height:1px;background:#e4e4e6"></div>
<svg class="abs" style="left:1949px;top:257px" width="40" height="24" viewBox="0 0 40 24"><path d="M3 22V3h14v9" fill="none" stroke="#555" stroke-width="1.5"/><path d="M6 7h8M6 11h6" stroke="#555" stroke-width="1.3"/><ellipse cx="15" cy="17" rx="7" ry="4.5" fill="#f5f5f7" stroke="#555" stroke-width="1.4"/><circle cx="15" cy="17" r="2" fill="none" stroke="#555" stroke-width="1.2"/><path d="M29 13h8l-4 4z" fill="#666"/></svg>
<div class="abs" style="left:1954px;top:304px;font-family:'Liberation Serif',serif;font-style:italic;font-weight:bold;font-size:22px;letter-spacing:1.5px;color:#333">fx</div>
<svg class="abs" style="left:1953px;top:373px" width="28" height="26" viewBox="0 0 28 26"><path d="M2 2h23v17h-4l-3 4-3-4H2z" fill="none" stroke="#333" stroke-width="2" stroke-linejoin="round"/><path d="M6 7h14M6 10.5h14M6 14h9" stroke="#555" stroke-width="1.4"/></svg>
<svg class="abs" style="left:1948px;top:438px" width="36" height="34" viewBox="0 0 36 34"><circle cx="14" cy="14.5" r="6.5" fill="none" stroke="#333" stroke-width="1.7"/><path d="M4 28.5c0-5 4.5-8.5 10-8.5s10 3.5 10 8.5c0 1.6-4.5 2.2-10 2.2s-10-.6-10-2.2z" fill="#f5f5f7" stroke="#333" stroke-width="1.7"/><path d="M24 13.5l-1.2 3.8 4-2.6" fill="#f5f5f7" stroke="#333" stroke-width="1.4" stroke-linejoin="round"/><ellipse cx="24.5" cy="8.5" rx="7.5" ry="5.5" fill="#f5f5f7" stroke="#333" stroke-width="1.6"/><path d="M21 8.5h1.2M24 8.5h1.2M27 8.5h1.2" stroke="#333" stroke-width="1.5"/></svg>
<div class="abs" style="left:1958px;top:907px;width:30px;height:17px;border-radius:9px;background:#c9c9cb"></div>
<svg class="abs" style="left:1938px;top:901px" width="30" height="30" viewBox="0 0 30 30"><circle cx="15" cy="15" r="13" fill="#fff" stroke="#333" stroke-width="1.6"/><circle cx="15" cy="15" r="3.2" fill="#222"/><path d="M15 8.5v2M15 19.5v2M8.5 15h2M19.5 15h2M10.4 10.4l1.4 1.4M18.2 18.2l1.4 1.4M10.4 19.6l1.4-1.4M18.2 11.8l1.4-1.4" stroke="#333" stroke-width="1.2"/></svg>
<svg class="abs" style="left:1947px;top:962px" width="40" height="42" viewBox="0 0 40 42"><circle cx="20" cy="18" r="11" fill="none" stroke="#35a57a" stroke-width="2"/><path d="M14 28v5h12v-5M14 36h12" stroke="#35a57a" stroke-width="2.2" fill="none"/><path d="M20 2v3M8 6l2 2M32 6l-2 2M3 17h3M34 17h3M5 26l2-1M35 26l-2-1" stroke="#35a57a" stroke-width="1.6"/><text x="20" y="22" font-size="9" text-anchor="middle" fill="#35a57a" font-family="Liberation Sans" font-style="italic">ZiA</text></svg>
<div class="abs" style="left:0;top:1008px;width:2000px;height:53px;background:#f1f1f3;border-top:1px solid #e2e2e4"></div>
<div class="abs" style="left:0;top:1009px;width:44px;height:52px;background:#e9eaeb"></div>
<svg class="abs" style="left:10px;top:1024px" width="26" height="22" viewBox="0 0 26 22"><path d="M13 2C6.5 2 2 5.5 2 10c0 2.5 1.4 4.6 3.6 6L4.5 20.5 9.5 17.5c1.1.3 2.3.5 3.5.5 6.5 0 11-3.5 11-8s-4.5-8-11-8z" fill="none" stroke="#555" stroke-width="1.5" stroke-linejoin="round"/><circle cx="9" cy="10" r="1.1" fill="#555"/><circle cx="13" cy="10" r="1.1" fill="#555"/><circle cx="17" cy="10" r="1.1" fill="#555"/></svg>
<svg class="abs" style="left:58px;top:1030px" width="18" height="12" viewBox="0 0 18 12"><path d="M2 10L9 3l7 7z" fill="#333"/></svg>
<svg class="abs" style="left:95px;top:1025px" width="20" height="20" viewBox="0 0 20 20"><path d="M10 2v16M2 10h16" stroke="#2fa57a" stroke-width="2.6"/></svg>
<div class="abs" style="left:128px;top:1010px;width:176px;height:51px;background:#fff;box-shadow:1px 0 2px rgba(0,0,0,0.08)"></div>
<div class="abs" style="left:149px;top:1027px;font-size:16px;color:#222">Page performance</div>
<div class="abs" style="left:1196px;top:1009px;width:1px;height:52px;background:#dedee0"></div>
<div class="abs" style="left:1205px;top:1024px;width:3px;height:24px;border:1px solid #ccc;border-radius:2px"></div>
<div class="abs" style="left:1705px;top:1009px;width:1px;height:52px;background:#dcdcde"></div>
<div class="abs" style="left:1751px;top:1009px;width:1px;height:52px;background:#dcdcde"></div>
<div class="abs" style="left:1799px;top:1009px;width:1px;height:52px;background:#dcdcde"></div>
<div class="abs" style="left:1951px;top:1009px;width:1px;height:52px;background:#dcdcde"></div>
<svg class="abs" style="left:1717px;top:1026px" width="23" height="19" viewBox="0 0 23 19"><rect x="1.5" y="1.5" width="19" height="15" rx="1" fill="none" stroke="#555" stroke-width="1.5"/><rect x="4.5" y="4.5" width="13" height="9" rx="2" fill="none" stroke="#aaa" stroke-width="1"/></svg>
<svg class="abs" style="left:1762px;top:1027px" width="27" height="16" viewBox="0 0 27 16"><rect x="1" y="1" width="25" height="14" rx="2" fill="none" stroke="#333" stroke-width="1.6"/><path d="M4 5h2M8 5h2M12 5h2M16 5h2M20 5h3M4 8h2M8 8h2M12 8h2M16 8h2M20 8h3M6 11h15" stroke="#333" stroke-width="1.3"/></svg>
<div class="abs" style="left:1812px;top:1034px;width:12px;height:2px;background:#333"></div>
<div class="abs" style="left:1834px;top:1022px;width:59px;height:26px;background:#fff"></div>
<div class="abs" style="left:1893px;top:1022px;width:22px;height:26px;background:#fafafb"></div>
<div class="abs" style="left:1847px;top:1026px;font-size:15px;color:#222">100%</div>
<svg class="abs" style="left:1899px;top:1031px" width="10" height="7" viewBox="0 0 10 7"><path d="M1 1.5l4 4 4-4" fill="none" stroke="#aaa" stroke-width="1.2"/></svg>
<svg class="abs" style="left:1926px;top:1029px" width="13" height="13" viewBox="0 0 13 13"><path d="M6.5 0v13M0 6.5h13" stroke="#333" stroke-width="2.2"/></svg>
<svg class="abs" style="left:1967px;top:1027px" width="20" height="20" viewBox="0 0 20 20"><path d="M2 7V2h5M2 2l6 6M13 2h5v5M18 2l-6 6M2 13v5h5M2 18l6-6M18 13v5h-5M18 18l-6-6" fill="none" stroke="#444" stroke-width="1.5"/></svg></body></html>
